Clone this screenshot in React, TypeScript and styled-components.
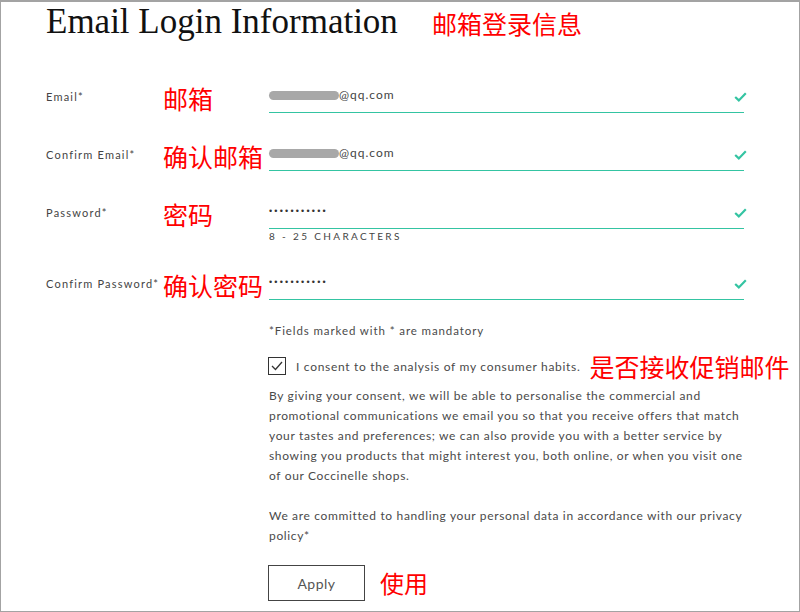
import styled, { createGlobalStyle } from 'styled-components';

const GlobalStyle = createGlobalStyle`
  * {
    box-sizing: border-box;
  }
  body {
    margin: 0;
    background: #fff;
    font-family: Lato, "Liberation Sans", "Noto Sans CJK SC", sans-serif;
  }
`;

const teal = '#34c4a2';
const cjk = '"Noto Sans CJK SC", "Noto Sans", sans-serif';

const Frame = styled.div`
  width: 800px;
  height: 612px;
  border: 1px solid #a3a3a3;
  border-top-width: 2px;
  padding-left: 45px;
  overflow: hidden;
  background: #fff;
`;

const Header = styled.div`
  display: flex;
  align-items: center;
  gap: 34px;
  padding-top: 2px;
`;

const Title = styled.h1`
  margin: 0;
  font-family: "Liberation Serif", serif;
  font-weight: 400;
  font-size: 35px;
  line-height: 36px;
  color: #111;
`;

const Note = styled.span<{ $size?: number }>`
  font-family: ${cjk};
  font-size: ${(p) => p.$size ?? 25}px;
  line-height: 26px;
  color: #ff0000;
  white-space: nowrap;
`;

const HeaderNote = styled(Note)`
  margin-top: 2px;
`;

const Form = styled.div`
  display: flex;
  flex-direction: column;
  gap: 30px;
  margin-top: 45px;
`;

const Row = styled.div`
  display: grid;
  grid-template-columns: 117px 106px 475px;
  align-items: start;
`;

const Label = styled.span`
  margin-top: 5px;
  font-size: 11px;
  line-height: 14px;
  letter-spacing: 1.2px;
  color: #444;
  white-space: nowrap;
`;

const Field = styled.div`
  display: flex;
  align-items: center;
  justify-content: space-between;
  height: 28px;
  padding-bottom: 7px;
  border-bottom: 1px solid ${teal};
`;

const Value = styled.span`
  display: flex;
  align-items: center;
  font-size: 12px;
  line-height: 20px;
  letter-spacing: 1px;
  color: #444;
`;

const Redacted = styled.span<{ $w: number }>`
  display: inline-block;
  width: ${(p) => p.$w}px;
  height: 9px;
  border-radius: 5px;
  background: #a8a8a8;
`;

const Dots = styled.span`
  font-family: "Liberation Sans", sans-serif;
  font-size: 9px;
  letter-spacing: 2.2px;
  color: #333;
`;

const Check = styled.svg`
  width: 13px;
  height: 10px;
  margin-top: 4px;
  margin-right: -3px;
`;

const Hint = styled.div`
  margin-top: 1px;
  font-size: 10px;
  line-height: 12px;
  letter-spacing: 2.35px;
  color: #444;
`;

const Extras = styled.div`
  margin-left: 223px;
  color: #4a4a4a;
`;

const Mandatory = styled.p`
  margin: 23px 0 0;
  font-size: 11.5px;
  line-height: 16px;
  letter-spacing: 0.9px;
`;

const ConsentRow = styled.label`
  display: flex;
  align-items: center;
  margin-top: 14px;
  height: 26px;
`;

const Box = styled.span`
  display: flex;
  align-items: center;
  justify-content: center;
  flex-shrink: 0;
  width: 18px;
  height: 18px;
  margin-left: -1px;
  margin-right: 10px;
  border: 1.5px solid #333;
`;

const ConsentText = styled.span`
  font-size: 12px;
  letter-spacing: 0.7px;
  margin-right: 9px;
  white-space: nowrap;
`;

const Para = styled.p<{ $gap: number }>`
  margin: ${(p) => p.$gap}px 0 0;
  font-size: 12px;
  line-height: 20px;
  letter-spacing: 0.65px;
  white-space: nowrap;
`;

const ButtonRow = styled.div`
  display: flex;
  align-items: center;
  gap: 15px;
  margin-top: 19px;
`;

const Button = styled.button`
  width: 97px;
  height: 36px;
  margin-left: -1px;
  background: #fff;
  border: 1.5px solid #444;
  border-radius: 0;
  font-family: Lato, "Liberation Sans", sans-serif;
  font-size: 14px;
  letter-spacing: 0.5px;
  color: #555;
`;

const TickIcon = () => (
  <Check viewBox="0 0 13 10">
    <polyline points="1.2,5 4.8,8.4 11.8,1.2" fill="none" stroke={teal} strokeWidth="2.2" />
  </Check>
);

type RowProps = {
  label: string;
  note: string;
  value: React.ReactNode;
  hint?: string;
};

const FormRow = ({ label, note, value, hint }: RowProps) => (
  <Row>
    <Label>{label}</Label>
    <Note>{note}</Note>
    <div>
      <Field>
        <Value>{value}</Value>
        <TickIcon />
      </Field>
      {hint && <Hint>{hint}</Hint>}
    </div>
  </Row>
);

const App = () => (
  <>
    <GlobalStyle />
    <Frame>
      <Header>
        <Title>Email Login Information</Title>
        <HeaderNote>邮箱登录信息</HeaderNote>
      </Header>
      <Form>
        <FormRow
          label="Email*"
          note="邮箱"
          value={
            <>
              <Redacted $w={70} />
              @qq.com
            </>
          }
        />
        <FormRow
          label="Confirm Email*"
          note="确认邮箱"
          value={
            <>
              <Redacted $w={70} />
              @qq.com
            </>
          }
        />
        <FormRow label="Password*" note="密码" value={<Dots>•••••••••••</Dots>} hint="8 - 25 CHARACTERS" />
        <FormRow label="Confirm Password*" note="确认密码" value={<Dots>•••••••••••</Dots>} />
      </Form>
      <Extras>
        <Mandatory>*Fields marked with * are mandatory</Mandatory>
        <ConsentRow>
          <Box>
            <svg width="12" height="10" viewBox="0 0 12 10">
              <polyline points="1,5 4.5,8.5 11,1" fill="none" stroke="#333" strokeWidth="1.3" />
            </svg>
          </Box>
          <ConsentText>I consent to the analysis of my consumer habits.</ConsentText>
          <Note>是否接收促销邮件</Note>
        </ConsentRow>
        <Para $gap={7}>
          By giving your consent, we will be able to personalise the commercial and
          <br />
          promotional communications we email you so that you receive offers that match
          <br />
          your tastes and preferences; we can also provide you with a better service by
          <br />
          showing you products that might interest you, both online, or when you visit one
          <br />
          of our Coccinelle shops.
        </Para>
        <Para $gap={20}>
          We are committed to handling your personal data in accordance with our privacy
          <br />
          policy*
        </Para>
        <ButtonRow>
          <Button>Apply</Button>
          <Note $size={24}>使用</Note>
        </ButtonRow>
      </Extras>
    </Frame>
  </>
);

export default App;
